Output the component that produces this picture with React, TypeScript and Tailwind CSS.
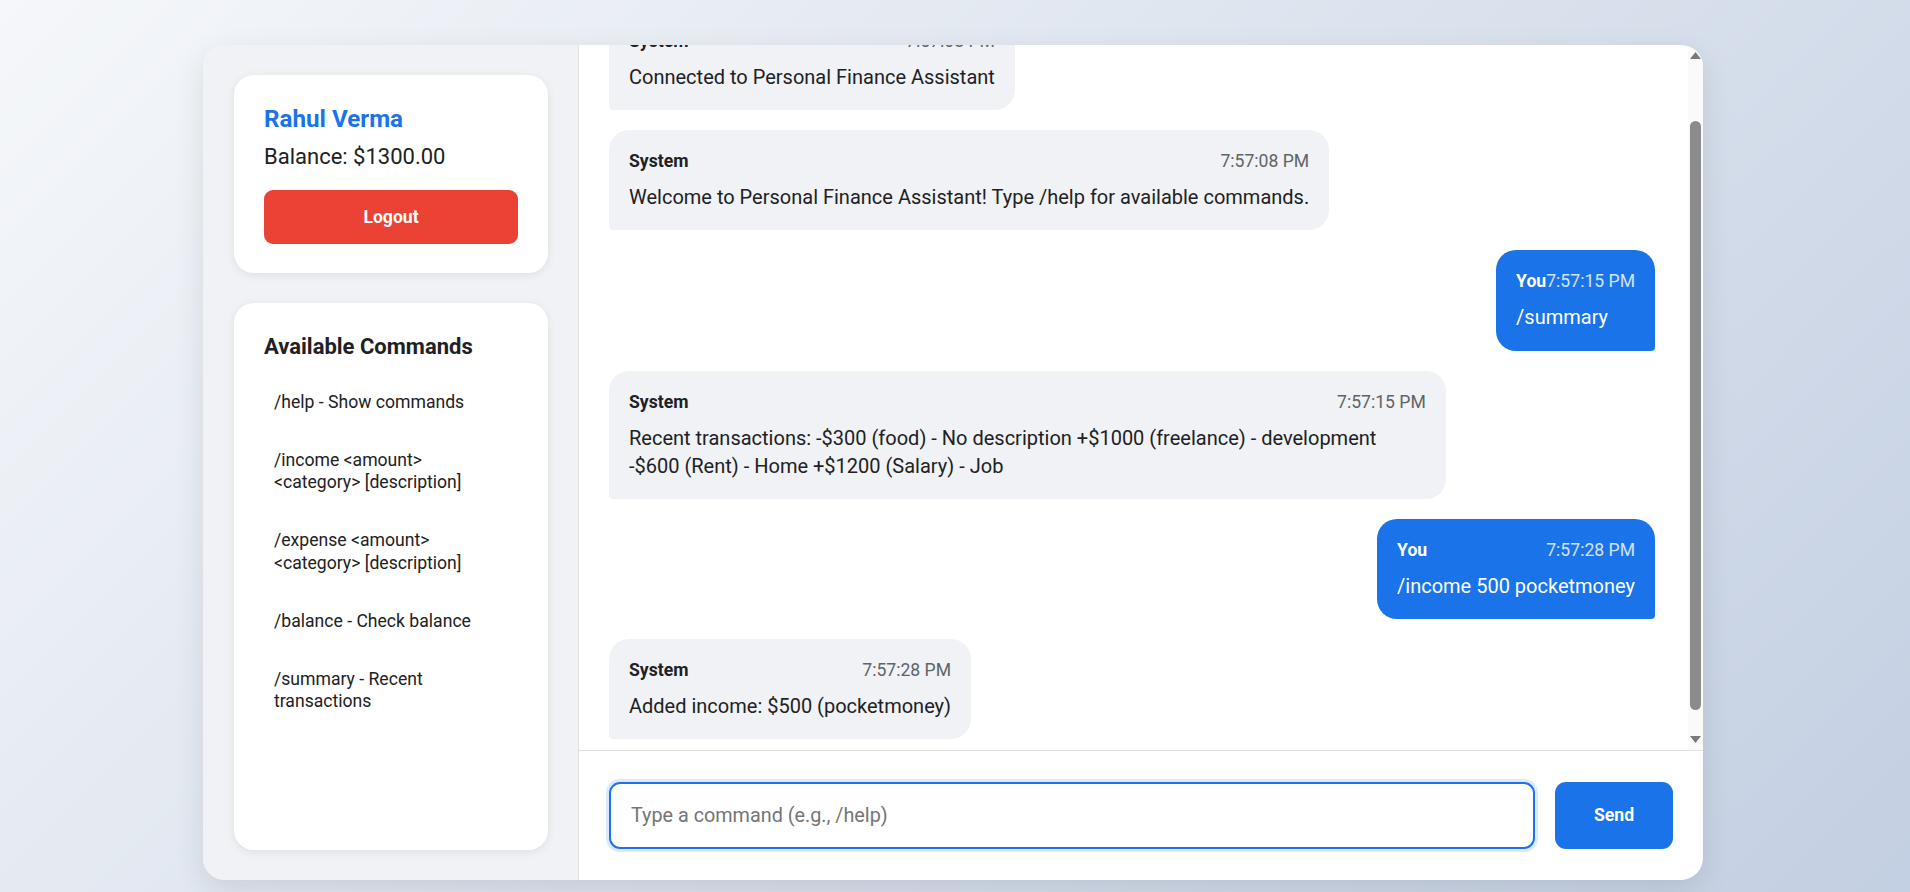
import React, { useEffect, useRef, useState } from 'react';

type Message = {
  id: number;
  sender: 'System' | 'You';
  time: string;
  text: string;
};

const messages: Message[] = [
  { id: 1, sender: 'System', time: '7:57:08 PM', text: 'Connected to Personal Finance Assistant' },
  { id: 2, sender: 'System', time: '7:57:08 PM', text: 'Welcome to Personal Finance Assistant! Type /help for available commands.' },
  { id: 3, sender: 'You', time: '7:57:15 PM', text: '/summary' },
  {
    id: 4,
    sender: 'System',
    time: '7:57:15 PM',
    text: 'Recent transactions: -$300 (food) - No description +$1000 (freelance) - development -$600 (Rent) - Home +$1200 (Salary) - Job',
  },
  { id: 5, sender: 'You', time: '7:57:28 PM', text: '/income 500 pocketmoney' },
  { id: 6, sender: 'System', time: '7:57:28 PM', text: 'Added income: $500 (pocketmoney)' },
];

const commands = [
  '/help - Show commands',
  '/income <amount> <category> [description]',
  '/expense <amount> <category> [description]',
  '/balance - Check balance',
  '/summary - Recent transactions',
];

const ChatBubble = ({ msg }: { msg: Message }) => {
  const mine = msg.sender === 'You';
  return (
    <div
      className={
        mine
          ? 'self-end max-w-[80%] bg-[#1a73e8] text-white rounded-[20px] rounded-br-[4px] py-[19px] px-[20px]'
          : 'self-start max-w-[80%] bg-[#f0f2f5] text-[#202124] rounded-[20px] rounded-bl-[4px] py-[19px] px-[20px]'
      }
    >
      <div className="flex justify-between items-center text-[17.6px] leading-[24.6px] mb-[9.4px]">
        <span className="font-bold">{msg.sender}</span>
        <span className={mine ? 'text-white/80' : 'text-[#5f6368]'}>{msg.time}</span>
      </div>
      <div className="text-[20px] leading-[28.2px]">{msg.text}</div>
    </div>
  );
};

// classic scrollbar look for the message list
const ScrollTrack = () => (
  <div className="w-[15px] shrink-0 bg-[#fafafa] flex flex-col items-center">
    <div className="h-[15px] flex items-end justify-center pb-[1px]">
      <svg width="11" height="7" viewBox="0 0 11 7">
        <polygon points="0,7 5.5,0 11,7" fill="#7a7a7a" />
      </svg>
    </div>
    <div className="flex-1 pt-[61px]">
      <div className="w-[11px] h-[589px] rounded-full bg-[#8b8b8b]" />
    </div>
    <div className="h-[15px] flex items-start justify-center pt-[1px]">
      <svg width="11" height="7" viewBox="0 0 11 7">
        <polygon points="0,0 11,0 5.5,7" fill="#7a7a7a" />
      </svg>
    </div>
  </div>
);

export default function App() {
  const [input, setInput] = useState('');
  const listRef = useRef<HTMLDivElement>(null);

  useEffect(() => {
    // keep the newest message in view
    if (listRef.current) listRef.current.scrollTop = listRef.current.scrollHeight;
  }, []);

  return (
    <div className="h-[892px] overflow-hidden bg-[linear-gradient(135deg,#f5f7fa_0%,#c3cfe2_100%)] font-[family-name:Roboto,sans-serif] pt-[45px]">
      <div className="ml-[203px] w-[1500px] h-[835px] bg-white rounded-[22px] shadow-[0_10px_30px_rgba(0,0,0,0.1)] overflow-hidden flex">
        {/* sidebar */}
        <div className="w-[376px] shrink-0 bg-[#f0f2f5] border-r border-[#e0e0e0] pl-[31px] pr-[30px] py-[30px] flex flex-col gap-[30px]">
          <div className="bg-white rounded-[20px] shadow-[0_2px_10px_rgba(0,0,0,0.08)] pt-[30px] pb-[29px] px-[30px]">
            <div className="text-[24.2px] leading-[28.3px] font-bold text-[#1a73e8] mb-[11px]">Rahul Verma</div>
            <div className="text-[22px] leading-[25.8px] text-[#202124] mb-[20px]">Balance: $1300.00</div>
            <button className="w-full h-[54px] rounded-[9px] bg-[#ea4335] text-white font-bold text-[17.6px]">
              Logout
            </button>
          </div>

          <div className="flex-1 bg-white rounded-[20px] shadow-[0_2px_10px_rgba(0,0,0,0.08)] pt-[31px] px-[30px]">
            <h3 className="text-[22px] leading-[25.8px] font-bold text-[#202124] mb-[20px]">Available Commands</h3>
            <ul>
              {commands.map((c) => (
                <li key={c} className="text-[17.6px] leading-[22.8px] text-[#202124] px-[10px] py-[11px] mb-[13px]">
                  {c}
                </li>
              ))}
            </ul>
          </div>
        </div>

        {/* chat */}
        <div className="flex-1 flex flex-col min-w-0">
          <div className="flex-1 flex min-h-0">
            <div
              ref={listRef}
              className="flex-1 min-w-0 overflow-y-auto [scrollbar-width:none] pl-[30px] pr-[33px] pt-[39px] pb-[11px] flex flex-col gap-[20px]"
            >
              {messages.map((m) => (
                <ChatBubble key={m.id} msg={m} />
              ))}
            </div>
            <ScrollTrack />
          </div>
          <div className="border-t border-[#e0e0e0] px-[30px] py-[31px] flex gap-[20px]">
            <input
              value={input}
              onChange={(e) => setInput(e.target.value)}
              placeholder="Type a command (e.g., /help)"
              className="flex-1 h-[67px] border-2 border-[#1a73e8] rounded-[11px] px-[20px] text-[19.8px] text-[#202124] placeholder:text-[#757575] outline-none shadow-[0_0_0_3px_rgba(26,115,232,0.15)]"
            />
            <button className="w-[118px] h-[67px] rounded-[11px] bg-[#1a73e8] text-white font-bold text-[17.6px]">
              Send
            </button>
          </div>
        </div>
      </div>
    </div>
  );
}
